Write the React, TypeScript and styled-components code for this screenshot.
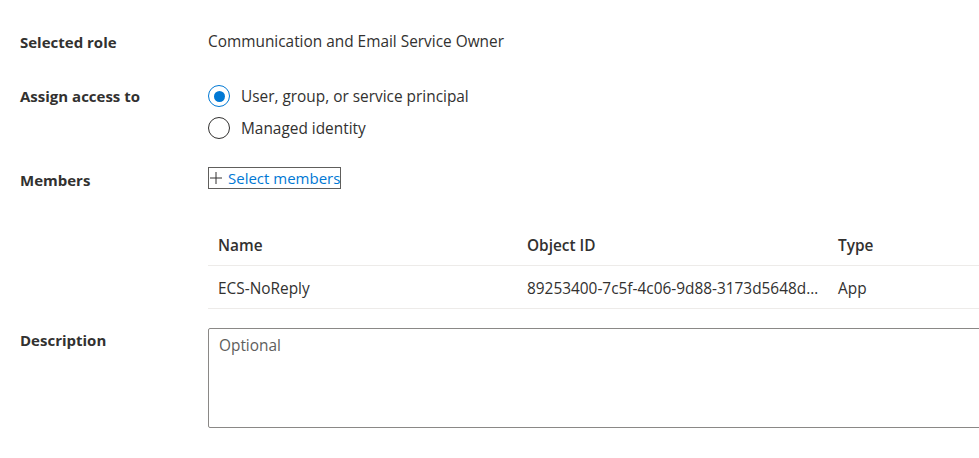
import styled, { createGlobalStyle } from "styled-components";

const GlobalStyle = createGlobalStyle`
  html, body {
    margin: 0;
    padding: 0;
    background: #ffffff;
  }
  body {
    font-family: "Open Sans", "Liberation Sans", sans-serif;
    font-size: 15.4px;
    color: #323130;
    overflow: hidden;
  }
`;

const Page = styled.div`
  width: 979px;
  height: 458px;
  overflow: hidden;
  padding: 32px 0 0 20px;
  box-sizing: border-box;
`;

interface FieldProps {
  mt: number;
}

const Field = styled.div<FieldProps>`
  display: grid;
  grid-template-columns: 188px 800px;
  margin-top: ${(props) => props.mt}px;
`;

interface LabelProps {
  lh?: number;
  pt?: number;
}

const Label = styled.div<LabelProps>`
  font-weight: 700;
  font-size: 15px;
  line-height: ${(props) => props.lh || 20}px;
  padding-top: ${(props) => props.pt || 0}px;
`;

const Value = styled.div`
  line-height: 20px;
`;

const RadioGroup = styled.div`
  display: flex;
  flex-direction: column;
`;

const RadioOption = styled.label`
  display: flex;
  align-items: center;
  height: 32px;
  gap: 11px;
  cursor: pointer;
`;

interface CircleProps {
  checked: boolean;
}

const RadioCircle = styled.span<CircleProps>`
  width: 22px;
  height: 22px;
  border-radius: 50%;
  box-sizing: border-box;
  border: 1px solid ${(props) => (props.checked ? "#0078d4" : "#323130")};
  display: flex;
  align-items: center;
  justify-content: center;

  &::after {
    content: "";
    width: 11px;
    height: 11px;
    border-radius: 50%;
    background: #0078d4;
    display: ${(props) => (props.checked ? "block" : "none")};
  }
`;

const MembersBlock = styled.div`
  display: flex;
  flex-direction: column;
`;

const SelectButton = styled.button`
  align-self: flex-start;
  display: flex;
  align-items: center;
  gap: 6px;
  height: 22px;
  padding: 0 0 0 1px;
  margin-top: -3px;
  background: none;
  border: 1px solid #605e5c;
  color: #0078d4;
  font-family: inherit;
  font-size: 15px;
  cursor: pointer;

  svg {
    width: 12px;
    height: 12px;
  }
`;

const Table = styled.div`
  margin-top: 34px;
  width: 800px;
`;

interface RowProps {
  header?: boolean;
}

const Row = styled.div<RowProps>`
  display: grid;
  grid-template-columns: 309px 311px 1fr;
  height: 42px;
  align-items: center;
  border-bottom: 1px solid #edebe9;
  font-weight: ${(props) => (props.header ? 600 : 400)};
`;

const Cell = styled.div`
  padding: 2px 6px 0 10px;
  white-space: nowrap;
  overflow: hidden;
  text-overflow: ellipsis;
`;

const TextArea = styled.textarea`
  width: 800px;
  height: 100px;
  box-sizing: border-box;
  border: 1px solid #8a8886;
  border-radius: 2px;
  padding: 6px 10px;
  font-family: inherit;
  font-size: 15.4px;
  color: #323130;
  resize: none;
  outline: none;

  &::placeholder {
    color: #605e5c;
  }
`;

const PlusIcon = () => (
  <svg viewBox="0 0 12 12" fill="none" stroke="#323130" strokeWidth="1">
    <line x1="6" y1="0" x2="6" y2="12" />
    <line x1="0" y1="6" x2="12" y2="6" />
  </svg>
);

const App = () => {
  return (
    <>
      <GlobalStyle />
      <Page>
        <Field mt={0}>
          <Label>Selected role</Label>
          <Value>Communication and Email Service Owner</Value>
        </Field>

        <Field mt={28}>
          <Label lh={32}>Assign access to</Label>
          <RadioGroup>
            <RadioOption>
              <RadioCircle checked />
              User, group, or service principal
            </RadioOption>
            <RadioOption>
              <RadioCircle checked={false} />
              Managed identity
            </RadioOption>
          </RadioGroup>
        </Field>

        <Field mt={26}>
          <Label>Members</Label>
          <MembersBlock>
            <SelectButton>
              <PlusIcon />
              Select members
            </SelectButton>
            <Table>
              <Row header>
                <Cell>Name</Cell>
                <Cell>Object ID</Cell>
                <Cell>Type</Cell>
              </Row>
              <Row>
                <Cell>ECS-NoReply</Cell>
                <Cell>89253400-7c5f-4c06-9d88-3173d5648d5e</Cell>
                <Cell>App</Cell>
              </Row>
            </Table>
          </MembersBlock>
        </Field>

        <Field mt={19}>
          <Label pt={2}>Description</Label>
          <TextArea placeholder="Optional" />
        </Field>
      </Page>
    </>
  );
};

export default App;
